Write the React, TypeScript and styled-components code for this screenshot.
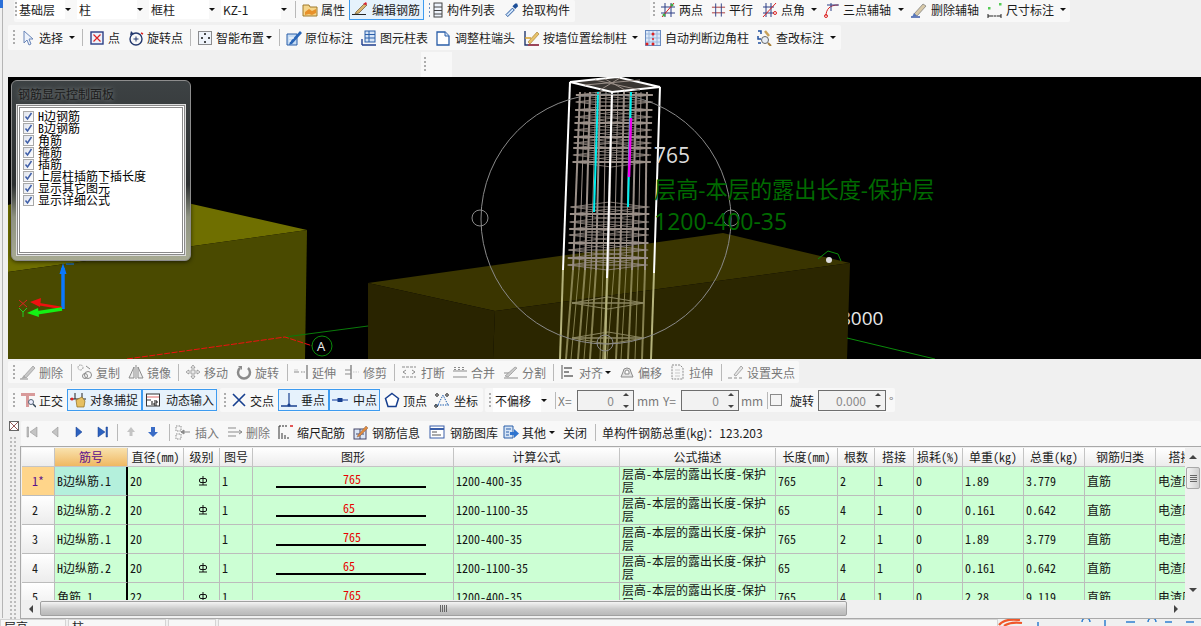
import React from "react";
import styled, { createGlobalStyle } from "styled-components";

const Global = createGlobalStyle`
  html, body { margin: 0; padding: 0; background: #f0f0f0; }
  body { font-family: "Noto Sans CJK SC", "Liberation Sans", sans-serif; font-size: 12px; color: #1c1c1c; }
`;

const Page = styled.div`
  position: relative; width: 1201px; height: 626px; overflow: hidden;
  background: #f0f0f0; display: flex; flex-direction: column;
  &::before { content: ""; position: absolute; left: 0; top: 0; width: 3px; height: 8px; background: #2a6fd8; }
  &::after { content: ""; position: absolute; left: 2px; top: 8px; bottom: 8px; width: 1px; background: #b5b5b5; }
`;
const Row = styled.div<{ $h: number; $mt?: number }>`
  display: flex; height: ${p => p.$h}px; margin-top: ${p => p.$mt ?? 0}px; flex: none;
`;
const BarBox = styled.div<{ $w: number; $ml: number; $pl: number; $mb?: number; $pb?: number }>`
  display: flex; align-items: center; flex: none; box-sizing: border-box;
  width: ${p => p.$w}px; margin-left: ${p => p.$ml}px; padding-left: ${p => p.$pl}px;
  margin-bottom: ${p => p.$mb ?? 0}px; padding-bottom: ${p => p.$pb ?? 0}px;
  background: #f8f8f8; border-radius: 2px;
`;
const Cell = styled.div<{ $w: number }>`
  display: flex; align-items: center; flex: none; width: ${p => p.$w}px; height: 100%; white-space: nowrap;
`;
const ToolBody = styled.div<{ $active?: boolean; $dim?: boolean }>`
  display: flex; align-items: center; width: 100%; height: ${p => (p.$active ? "22px" : "100%")};
  box-sizing: border-box; color: ${p => (p.$dim ? "#787878" : "#1c1c1c")};
  ${p => p.$active && "border: 1px solid #3d9bf0; background: #e6f2fc; margin-top: -1px;"}
`;
const IconSlot = styled.span<{ $w: number; $active?: boolean }>`
  display: flex; justify-content: center; flex: none; width: ${p => p.$w - (p.$active ? 1 : 0) - 3}px; margin-right: 3px;
`;
const Grip = styled.div`
  width: 2px; height: 15px;
  background: repeating-linear-gradient(#adadad 0 2px, transparent 2px 4px);
`;
const Sep = styled.div`
  width: 1px; height: 17px; background: #b9b9b9;
`;
const Drop = styled.div`
  width: 0; height: 0; border-left: 3px solid transparent; border-right: 3px solid transparent; border-top: 3px solid #111;
`;
const Combo = styled.div`
  width: 100%; height: 100%; box-sizing: border-box; padding-left: 2px; background: #fff;
  display: flex; align-items: center; font-size: 12px;
`;
const Spin = styled.div`
  width: 100%; height: 21px; box-sizing: border-box; border: 1px solid #6e6e6e; background: #f2f2f2;
  display: flex; align-items: center; justify-content: flex-end; color: #8a8a8a; font-size: 12px;
`;
const SpinVal = styled.span`margin-right: 9px;`;
const SpinArrows = styled.div`
  display: flex; flex-direction: column; justify-content: space-between; height: 15px; margin-right: 4px;
`;
const ArrowUp = styled.div`
  width: 0; height: 0; border-left: 3px solid transparent; border-right: 3px solid transparent; border-bottom: 3px solid #444;
`;
const ArrowDn = styled(ArrowUp)`transform: rotate(180deg);`;
const Square = styled.div`width: 10px; height: 10px; border: 1px solid #8a8a8a; background: #f4f4f4;`;
const Dim = styled.span`color: #787878;`;
const Handle = styled.div`
  margin: 2px 0 0 421px; width: 31px; height: 25px; background: #f8f8f8; display: flex; align-items: center; padding-left: 3px; box-sizing: border-box;
`;

/* ------------- icons ------------- */
const N = "#2c3f86", R = "#d22", G = "#8b8b8b", L = "#c9c9c9";
const icons: Record<string, React.ReactNode> = {
  prop: <><path d="M1 3h6l1 2h7v9H1z" fill="#f5d58a" stroke="#a07b2c" /><path d="M3 10l4-3 3 2 4-2v4l-4 2-3-1-4 1z" fill="#e8912a" /></>,
  edit: <><path d="M0 13.5h14" stroke="#222" /><path d="M4 11l8-8 3 1-8 8-4 1z" fill="#d9b46c" stroke="#6b5a3a" strokeWidth=".7" /><path d="M11 3l3-2 1 2-1 1z" fill="#d23" /></>,
  list: <><path d="M1 2h2M1 6h2M1 10h2M1 14h2" stroke="#3e6cb0" strokeWidth="1.5" strokeDasharray="1 1" /><rect x="6" y="1" width="8" height="14" fill="#eef3fb" stroke="#444" /><path d="M6 5h8M6 8.500h8M6 12h8" stroke="#444" /></>,
  pick: <><path d="M3 14l-1-1 7-7 2 2-7 7z" fill="#cfe4fb" stroke="#1d4f98" /><path d="M9 4l3 3 3-3-1-3h-2z" fill="#1d4f98" /></>,
  two: <><path d="M1 5h14M1 11h14M5 1v14M11 1v14" stroke={N} /><path d="M2 15L14 1" stroke={R} /><circle cx="4" cy="13" r="1.500" fill="#4a4" /><circle cx="12" cy="3" r="1.500" fill="#4a4" /></>,
  para: <><path d="M1 5h14M1 11h14" stroke="#a33" /><path d="M5 1v14M11 1v14" stroke={N} /></>,
  ang: <><path d="M1 5h11M1 11h11M4 1v14M9 1v14" stroke={N} /><path d="M1 15L14 1" stroke={R} /><circle cx="13" cy="11" r="1.500" fill="none" stroke={R} /></>,
  three: <><path d="M2 14C2 7 6 3 14 3" fill="none" stroke={R} /><path d="M7 1v8M3 3h12" stroke={N} /><circle cx="2" cy="14" r="1.500" fill="none" stroke={R} /></>,
  brush: <><path d="M0 15h9" stroke="#3b5aa8" strokeWidth="1.500" /><path d="M3 12l9-10 3 2-9 10z" fill="#d8c9a8" stroke="#777" strokeWidth=".7" /><path d="M1 15l2-4 3 3z" fill="#5577bb" /></>,
  dim: <><rect x="1" y="5" width="2.500" height="2.500" fill="#5c5" /><rect x="12" y="1" width="2.500" height="2.500" fill="#5c5" /><path d="M1 12v4M14 12v4M1 14h13" stroke="#222" /><path d="M6 14h1M9 14h1" stroke="#fff" /></>,
  cursor: <path d="M4 1v12l3-3 2 5 2-1-2-5h4z" fill="#eef3fb" stroke="#6a86b8" />,
  point: <><rect x="2" y="2" width="12" height="12" fill="#eef2fa" stroke={N} strokeWidth="1.400" /><path d="M4.500 4.500l7 7M11.500 4.500l-7 7" stroke={R} strokeWidth="1.200" /></>,
  rot: <><circle cx="8" cy="9" r="6" fill="none" stroke="#23386e" strokeWidth="1.400" /><path d="M8 6.500v5M5.500 9h5" stroke="#23386e" /><path d="M3 1l3 3-4 1z" fill="#23386e" /><path d="M13 3l2 1" stroke={R} strokeWidth="1.500" /></>,
  smart: <><rect x="1.500" y="1.500" width="13" height="13" fill="#eef3fa" stroke="#222" strokeDasharray="1 1" /><path d="M8 3v2M7 4h2M4 8h2M5 7v2M11 8h2M12 7v2M8 11v2M7 12h2" stroke="#111" /></>,
  inplace: <><path d="M1 4h10v11H1z" fill="#c7dcf3" stroke="#2a5ea8" /><path d="M4 12L14 1l2 2L6 14l-3 1z" fill="#2a66b8" /><path d="M3 8h5M3 11h2" stroke="#fff" /></>,
  table: <><path d="M1 15h14M1 9v6" stroke="#1f3f8f" strokeWidth="1.400" /><rect x="4" y="1" width="10" height="11" fill="#d5e4f6" stroke="#2a5ea8" /><path d="M4 4.500h10M4 8h10M8 1v11" stroke="#2a5ea8" /></>,
  adj: <><path d="M2 2h8l4 4v9H2z" fill="#fff" stroke="#2a5ea8" strokeWidth="1.300" /><path d="M10 2v4h4" fill="#d5e4f6" stroke="#2a5ea8" /></>,
  wall: <><path d="M1 1v14h14" fill="none" stroke="#23386e" strokeWidth="1.400" /><path d="M1 8h6" stroke="#d9a22a" strokeWidth="1.500" /><path d="M4 12L13 2l2 2-9 10z" fill="#e8c36a" stroke="#a0752a" strokeWidth=".6" /><path d="M4 15h11" stroke={R} /></>,
  auto: <><rect x=".5" y=".5" width="15" height="15" fill="#dbe8f8" stroke="#6a8cc0" /><path d="M4 1v14M8 1v14M12 1v14M1 4h14M1 8h14M1 12h14" stroke="#9cb7dc" /><circle cx="8" cy="4" r="1.500" fill={R} /><circle cx="2" cy="14" r="1.500" fill={R} /><circle cx="8" cy="14" r="1.500" fill={R} /><circle cx="8" cy="9" r="1" fill={R} /></>,
  check: <><path d="M1 1h3v3M1 6v3h3M1 13h3" fill="none" stroke="#1f4f9f" strokeWidth="1.500" /><path d="M8 1l4 5" stroke="#c9a25a" strokeWidth="2.500" /><circle cx="8" cy="10" r="3.500" fill="#e8eef6" stroke="#666" /><path d="M11 13l3 3" stroke="#a9803a" strokeWidth="2" /></>,
  dbrush: <><path d="M0 15h8" stroke={G} /><path d="M4 12l9-10 2 2-9 10z" fill={L} stroke={G} strokeWidth=".6" /><path d="M1 15l3-4 2 3z" fill="#aaa" /></>,
  copy: <><circle cx="3.500" cy="3.500" r="2.500" fill="none" stroke={G} strokeDasharray="1.500 1" /><circle cx="11" cy="11" r="3.500" fill="none" stroke={G} /><circle cx="8" cy="12" r="2.500" fill="none" stroke={G} /><path d="M9 2l4 3" stroke={G} /></>,
  mirror: <><path d="M8 1v14" stroke={G} /><path d="M6 3L1 14h5zM10 3l5 11h-5z" fill="#eee" stroke={G} /></>,
  move: <path d="M8 1l2 2.500H9V7h3.500V6L15 8l-2.500 2V9H9v3.500h1L8 15l-2-2.500h1V9H3.500v1L1 8l2.500-2v1H7V3.500H6z" fill="#e8e8e8" stroke={G} strokeWidth=".7" />,
  drot: <><path d="M4 4a6 6 0 1 0 8 0" fill="none" stroke={G} strokeWidth="2.500" /><path d="M2 2h4v4z" fill={G} /></>,
  extend: <><path d="M14 1v14" stroke={G} strokeWidth="1.500" /><path d="M1 8h5" stroke={G} /><path d="M8 8h4" stroke={G} strokeDasharray="1.500 1" /><path d="M1 6h4" stroke={L} /></>,
  trim: <><path d="M7 1v14" stroke={G} strokeWidth="1.500" /><path d="M1 6h6M1 10h6" stroke={G} /><path d="M9 8h6" stroke={L} strokeDasharray="1.500 1" /></>,
  brk: <><path d="M1 3h14M1 13h14" stroke={G} strokeDasharray="3 1" /><path d="M5 6L2 8l3 2M11 6l3 2-3 2" fill="none" stroke={G} /></>,
  merge: <><path d="M1 7h14M1 13h14" stroke={G} /><path d="M3 3v4M7 3v4M11 3v4" stroke={G} strokeDasharray="1 1" strokeWidth="2" /></>,
  split: <><path d="M1 14h14M1 9h8" stroke={G} /><path d="M2 12L12 3l2 1-9 9z" fill={L} stroke={G} strokeWidth=".6" /></>,
  align: <><path d="M2 1v14" stroke={G} strokeWidth="1.500" /><path d="M4 4h8M4 8h5M4 12h9" stroke={G} strokeWidth="2" /></>,
  offset: <><path d="M4 8a4 4 0 0 1 8 0l2 5H2z" fill="#e4e4e4" stroke={G} /><path d="M6 8a2 2 0 0 1 4 0v2H6z" fill="#fff" stroke={G} /></>,
  stretch: <><path d="M2 1h8l3 3v11H2z" fill="#f7f7f7" stroke={G} strokeDasharray="2 1" /><path d="M5 6h5M5 9h5M5 12h5" stroke={L} /></>,
  setp: <><path d="M0 14h4M6 14h3M11 14h3" stroke={G} /><path d="M6 11l7-9 2 2-7 8z" fill="#e7e7e7" stroke={G} strokeWidth=".7" /></>,
  ortho: <><path d="M1 1h14v3H9v11H6V4H1z" fill="#d89a9a" /><circle cx="11" cy="10" r="2.500" fill="#eef" stroke="#567" /><path d="M13 12l3 3" stroke="#345" strokeWidth="1.500" /></>,
  snap: <><path d="M0 7h16" stroke="#222" /><path d="M5 1v6M12 1v6" stroke="#222" /><circle cx="2" cy="7" r="1.500" fill={R} /><path d="M6 8l6-3 3 4-1 6H7z" fill="#e6c062" stroke="#8a6a20" strokeWidth=".7" /></>,
  dyn: <><rect x="1.500" y="2" width="13" height="12" fill="#fff" stroke="#333" /><path d="M2 5h12" stroke="#d66" /><path d="M2 8h4" stroke="#333" /><path d="M7 9v4M9 9h3v2H9v2h3" fill="none" stroke="#111" /></>,
  cross: <path d="M2 2l12 12M14 2L2 14" stroke="#173f8f" strokeWidth="1.600" />,
  perp: <><path d="M0 14h16" stroke="#173f8f" strokeWidth="1.500" /><path d="M8 1v13" stroke="#173f8f" strokeWidth="1.200" /><circle cx="8" cy="13" r="1.600" fill="#173f8f" /></>,
  mid: <><path d="M0 8h16" stroke="#4a6cb8" strokeWidth="1.400" /><rect x="5.500" y="6" width="5" height="4" fill="#173f8f" /></>,
  vertex: <path d="M8 1.500l6.500 5-2.500 8H4L1.500 6.500z" fill="#fff" stroke="#173f8f" strokeWidth="1.500" />,
  coord: <><path d="M1 13h14M3 15L9 3l5 10" fill="none" stroke="#2060b0" strokeDasharray="1.500 1" /><circle cx="3" cy="3" r="1.300" fill="none" stroke="#222" /><circle cx="13" cy="3" r="1.300" fill="none" stroke="#222" /><circle cx="2" cy="14" r="1.300" fill="none" stroke="#222" /></>,
  first: <path d="M3 3h1.500v10H3zM13 3v10L6 8z" fill="#c4c4c4" stroke={G} strokeWidth=".5" />,
  prev: <path d="M11 3v10L5 8z" fill="#c4c4c4" stroke={G} strokeWidth=".5" />,
  next: <path d="M5 3v10l6-5z" fill="#2c62c0" stroke="#173f8f" strokeWidth=".5" />,
  last: <path d="M3 3v10l7-5zM11 3h1.500v10H11z" fill="#2c62c0" stroke="#173f8f" strokeWidth=".5" />,
  up: <path d="M8 3l4 5H9.500v4h-3V8H4z" fill="#c4c4c4" />,
  down: <path d="M6 3h4v5h3l-5 5-5-5h3z" fill="#3a6cc6" />,
  ins: <><path d="M1 2h5v5H1zM1 10h5v5H1z" fill="none" stroke={G} strokeDasharray="1.500 1" /><path d="M6 8h9M6 8l3-2v4z" stroke={G} fill={G} /></>,
  del: <><path d="M1 4h8M1 8h8M1 12h8" stroke={G} /><path d="M9 8h6M12 6l3 2-3 2" stroke={G} fill="none" /></>,
  scale: <><path d="M1 2h9" stroke="#222" strokeDasharray="2 1" /><path d="M12 2h3" stroke={R} strokeWidth="1.500" /><path d="M1 2v13M4 9v6M7 11v4M10 13v2" stroke="#333" /></>,
  info: <><rect x="1" y="5" width="12" height="10" fill="#dbe6f6" stroke="#446" /><path d="M3 10h8M7 5v10" stroke="#446" /><path d="M5 11l8-9 2 2-8 8-3 1z" fill="#e08a3c" stroke="#865" strokeWidth=".5" /></>,
  lib: <><rect x="1" y="2" width="14" height="12" fill="#fff" stroke="#3a5ea8" /><path d="M1 5h14" stroke="#3a5ea8" strokeWidth="2" /><path d="M3 8h5M3 11h9" stroke="#555" /></>,
  other: <><path d="M1 2h9v12H1z" fill="#d5e4f6" stroke="#2a5ea8" /><path d="M3 5h5M3 8h3M3 11h3" stroke="#2a5ea8" /><path d="M7 8h4V5l5 4.500L11 14v-3H7z" fill="#2f74cf" /></>,
};

const Icon: React.FC<{ n: string; s?: number }> = ({ n, s = 16 }) => (
  <svg width={s} height={s} viewBox="0 0 16 16">{icons[n]}</svg>
);

/* ------------- toolbars ------------- */
type It = { at: number; k: "tool" | "grip" | "sep" | "drop" | "combo" | "gap" | "spin" | "box" | "text"; t?: number; i?: string; l?: string; a?: boolean; d?: boolean };
const tool = (at: number, t: number, i: string, l = "", a = false): It => ({ at, k: "tool", t, i, l, a });
const dtool = (at: number, t: number, i: string, l = ""): It => ({ at, k: "tool", t, i, l, d: true });
const grip = (at: number): It => ({ at, k: "grip" });
const sep = (at: number): It => ({ at, k: "sep" });
const drop = (at: number): It => ({ at, k: "drop" });
const gap = (at: number): It => ({ at, k: "gap" });
const combo = (at: number, l: string): It => ({ at, k: "combo", l });
const spin = (at: number, l: string): It => ({ at, k: "spin", l });
const text = (at: number, l: string, d = false): It => ({ at, k: "text", l, d });

const renderItem = (it: It) => {
  switch (it.k) {
    case "grip": return <Grip />;
    case "sep": return <Sep />;
    case "drop": return <Drop />;
    case "combo": return <Combo>{it.l}</Combo>;
    case "box": return <Square />;
    case "text": return it.d ? <Dim>{it.l}</Dim> : <span>{it.l}</span>;
    case "spin": return <Spin><SpinVal>{it.l}</SpinVal><SpinArrows><ArrowUp /><ArrowDn /></SpinArrows></Spin>;
    case "tool": return (
      <ToolBody $active={it.a} $dim={it.d}>
        <IconSlot $w={it.t! - it.at} $active={it.a}><Icon n={it.i!} /></IconSlot>
        {it.l}
      </ToolBody>
    );
    default: return null;
  }
};

const Bar: React.FC<{ from: number; start: number; end: number; items: It[]; mb?: number; pb?: number }> = ({ from, start, end, items, mb, pb }) => (
  <BarBox $ml={start - from} $w={end - start} $pl={items[0].at - start} $mb={mb} $pb={pb}>
    {items.map((it, i) => (
      <Cell key={i} $w={(items[i + 1]?.at ?? end) - it.at}>{renderItem(it)}</Cell>
    ))}
  </BarBox>
);

const row1a: It[] = [grip(15), combo(17, "基础层"), drop(65), combo(77, "柱"), drop(137), combo(149, "框柱"), drop(209), combo(221, "KZ-1"), drop(281), sep(295),
  tool(302, 321, "prop", "属性"), gap(345), tool(349, 372, "edit", "编辑钢筋", true), gap(424), tool(428, 447, "list", "构件列表"), tool(504, 522, "pick", "拾取构件")];
const row1b: It[] = [grip(653), tool(660, 679, "two", "两点"), tool(711, 729, "para", "平行"), tool(762, 781, "ang", "点角"), drop(811),
  tool(824, 843, "three", "三点辅轴"), drop(898), tool(910, 931, "brush", "删除辅轴"), tool(986, 1006, "dim", "尺寸标注"), drop(1060)];
const row2: It[] = [grip(13), tool(20, 39, "cursor", "选择"), drop(69), sep(82), tool(89, 108, "point", "点"), tool(127, 147, "rot", "旋转点"), sep(190),
  tool(196, 216, "smart", "智能布置"), drop(266), sep(279), tool(285, 305, "inplace", "原位标注"), tool(361, 380, "table", "图元柱表"), tool(434, 455, "adj", "调整柱端头"),
  tool(523, 543, "wall", "按墙位置绘制柱"), drop(632), tool(643, 665, "auto", "自动判断边角柱"), tool(756, 776, "check", "查改标注"), drop(830)];
const row4: It[] = [grip(13), dtool(20, 39, "dbrush", "删除"), sep(71), dtool(76, 96, "copy", "复制"), dtool(127, 147, "mirror", "镜像"), sep(178),
  dtool(185, 204, "move", "移动"), dtool(235, 255, "drot", "旋转"), sep(287), dtool(293, 312, "extend", "延伸"), dtool(344, 363, "trim", "修剪"), sep(394),
  dtool(400, 421, "brk", "打断"), dtool(451, 471, "merge", "合并"), dtool(502, 522, "split", "分割"), sep(553), dtool(559, 579, "align", "对齐"), drop(605),
  dtool(618, 638, "offset", "偏移"), dtool(669, 689, "stretch", "拉伸"), sep(721), dtool(727, 747, "setp", "设置夹点")];
const row5a: It[] = [grip(13), tool(19, 39, "ortho", "正交"), gap(67), tool(67, 90, "snap", "对象捕捉", true), tool(142, 166, "dyn", "动态输入", true)];
const row5b: It[] = [grip(224), tool(230, 250, "cross", "交点"), tool(278, 301, "perp", "垂点", true), tool(329, 353, "mid", "中点", true), gap(380), tool(383, 403, "vertex", "顶点"), tool(433, 454, "coord", "坐标")];
const row5c: It[] = [grip(489), combo(493, "不偏移"), drop(541), sep(555), text(558, "X=", true), spin(577, "0"), gap(634), text(637, "mm", true), text(663, "Y=", true), spin(681, "0"), gap(739), text(741, "mm", true),
  sep(767), { at: 770, k: "box" }, text(790, "旋转"), spin(818, "0.000"), gap(886), text(889, "°", true)];
const row6: It[] = [tool(24, 43, "first"), tool(47, 66, "prev"), tool(71, 90, "next"), tool(95, 114, "last"), sep(117), tool(123, 142, "up"), tool(145, 164, "down"), sep(169),
  dtool(174, 195, "ins", "插入"), dtool(226, 246, "del", "删除"), tool(277, 297, "scale", "缩尺配筋"), tool(352, 372, "info", "钢筋信息"), tool(427, 450, "lib", "钢筋图库"),
  tool(502, 522, "other", "其他"), drop(549), { at: 563, k: "text", l: "关闭" }, sep(595), text(602, "单构件钢筋总重(kg)：123.203")];

/* ------------- 3D scene ------------- */
const Viewport = styled.div`
  position: relative; flex: none; height: 282px; margin-left: 8px; background: #000; overflow: hidden;
`;
const SceneSvg = styled.svg`display: block;`;
const SceneLabel = styled.text<{ $c: string; $s: number }>`
  font-family: "Open Sans", "Noto Sans CJK SC", sans-serif; font-size: ${p => p.$s}px; fill: ${p => p.$c};
`;
const top0 = [580, 585, 590, 596, 600, 606, 612, 618, 624, 630, 636, 641, 647];
const bot0 = [573, 579, 585, 591, 596, 603, 608, 614, 620, 626, 632, 638, 645];
const low0 = [566, 571, 578, 584, 590, 600, 603, 607, 616, 621, 628, 635, 642];
const levels = [95, 102, 110, 117, 123, 130, 137, 143, 148, 155, 162, 207, 214, 222, 229, 235, 243, 250, 258, 265];

const Scene: React.FC = () => (
  <SceneSvg width="1193" height="282" viewBox="8 77 1193 282">
    <SceneLabel x="840" y="325" $c="#e8e8e8" $s={19}>8000</SceneLabel>
    <polygon points="8,205 90,181 307,230 8,272" fill="#6f6f00" />
    <polygon points="8,272 307,230 305,359 8,359" fill="#4a4a00" />
    <polygon points="368,283 723,233 850,263 495,311" fill="#3a3500" />
    <polygon points="368,283 495,311 493,359 368,359" fill="#292400" />
    <polygon points="495,311 850,263 847,359 493,359" fill="#2b2600" />
    <path d="M847 338L935 359" stroke="#0a8a0a" />
    <path d="M285 337L368 326" stroke="#0a7a0a" />
    <path d="M127 359L285 337L325 350" stroke="#f01010" strokeDasharray="6 1.500" fill="none" />
    <circle cx="322" cy="346" r="10" fill="#000" stroke="#0a8a0a" />
    <SceneLabel x="317" y="351" $c="#eee" $s={13}>A</SceneLabel>
    <path d="M818 259l10-8 10 3 3 7" fill="none" stroke="#0a8a0a" />
    <circle cx="829" cy="260" r="3" fill="#ddd" />

    <path d="M63 309V268" stroke="#0a78ff" strokeWidth="3.500" />
    <path d="M63 263l-3.500 11h7z" fill="#0a78ff" />
    <path d="M66 264h8" stroke="#0a78ff" />
    <path d="M62 308L38 304" stroke="#f01010" strokeWidth="2.500" />
    <path d="M30 302l11-4-1 9z" fill="#f01010" />
    <path d="M62 309L36 313" stroke="#14f014" strokeWidth="3.500" />
    <path d="M27 313l11-5 1 9z" fill="#14f014" />
    <path d="M19 300l8 7M27 300l-8 7" stroke="#d22" />
    <path d="M19 308l4 4 4-4M23 312v5" stroke="#2c2" fill="none" />

    {top0.map((x, i) => <path key={i} d={`M${x} 92L${bot0[i]} 270`} stroke="#9a8f88" strokeWidth={i % 2 ? 1 : 2} />)}
    {bot0.map((x, i) => <path key={i} d={`M${x} 270L${low0[i]} 359`} stroke="#96915e" strokeWidth={i % 2 ? 1 : 2} opacity=".85" />)}
    {levels.map((y, n) => {
      const l = 577 - (y - 92) * 0.05, r = 651 - (y - 92) * 0.03, m = (l + r) / 2;
      return (
        <g key={y} stroke="#9a8f88" fill="none">
          <path d={`M${l - 1} ${y}H${r + 2}`} strokeWidth={n % 2 ? 1 : 2} />
          <path d={`M${l} ${y}L${m} ${y - 5}L${r} ${y}L${m} ${y + 5}z`} strokeWidth=".8" />
        </g>
      );
    })}
    {[303, 338].map(y => (
      <g key={y} stroke="#8b8660" fill="none">
        <path d={`M572 ${y}H644`} strokeWidth="1.500" />
        <path d={`M572 ${y}L608 ${y - 6}L644 ${y}L608 ${y + 6}z`} />
      </g>
    ))}
    <path d="M598 92L594 212" stroke="#00f0f0" strokeWidth="2" />
    <path d="M631 92L628 207" stroke="#00f0f0" strokeWidth="2" />
    <path d="M631 118L629 177" stroke="#f000f0" strokeWidth="2.500" />

    <path d="M570 82L617 77L660 87L612 92z" fill="#3a3632" stroke="#fff" strokeWidth="2" />
    <path d="M585 85L640 80M595 80L640 90M605 79L625 90M620 78L600 90" stroke="#9a8f88" />
    <g stroke="#fff" strokeWidth="2" fill="none">
      <path d="M570 82L563 270" />
      <path d="M660 87L654 273" />
      <path d="M612 92L607 278" />
    </g>
    <g stroke="#b5b37c" strokeWidth="2" fill="none">
      <path d="M563 270L560 359" />
      <path d="M654 273L651 359" />
      <path d="M607 278L605 359" />
    </g>

    <g stroke="#8a8a8a" fill="none">
      <circle cx="606" cy="219" r="125" />
      <circle cx="480" cy="218" r="8" />
      <circle cx="731" cy="218" r="8" />
      <circle cx="605" cy="343" r="8" />
    </g>
    <SceneLabel x="654" y="163" $c="#dcdcdc" $s={21}>765</SceneLabel>
    <SceneLabel x="654" y="198" $c="#006a00" $s={22.200}>层高-本层的露出长度-保护层</SceneLabel>
    <SceneLabel x="654" y="230" $c="#006a00" $s={23}>1200-400-35</SceneLabel>
  </SceneSvg>
);

/* ------------- rebar display panel ------------- */
const Panel = styled.div`
  position: absolute; left: 3px; top: 3px; width: 180px; height: 181px; box-sizing: border-box;
  border: 1px solid #8d8d8d; border-radius: 6px; padding: 6px 5px 5px;
  background: linear-gradient(#3d4244 0, #2b2e2f 58%, #8d9180 76%, #a7aa92 100%);
  box-shadow: 0 1px 4px rgba(0, 0, 0, .6);
`;
const PanelTitle = styled.div`
  height: 18px; line-height: 14px; padding-left: 1px; font-size: 12px; color: #1b1b1b;
  text-shadow: 0 0 5px #8a8f90;
`;
const PanelList = styled.div`
  height: 150px; box-sizing: border-box; border: 3px double #8a8a8a; background: #fff; padding: 2px 0 0 3px; outline: 1px solid #ddd;
`;
const PanelRow = styled.label`
  display: flex; align-items: center; height: 12px; font-size: 12px; line-height: 12px; color: #000; white-space: nowrap;
  font-feature-settings: "hwid";
`;
const CheckMark = styled.span`
  flex: none; width: 9px; height: 9px; margin-right: 4px; border: 1px solid #a9a9a9; display: flex;
  background: linear-gradient(135deg, #dfe3ec, #fff);
`;
const panelRows = ["H边钢筋", "B边钢筋", "角筋", "箍筋", "插筋", "上层柱插筋下插长度", "显示其它图元", "显示详细公式"];

/* ------------- lower area ------------- */
const Lower = styled.div`display: flex; flex: none; margin-top: 9px; height: 198px;`;
const Side = styled.div`
  flex: none; width: 20px; box-sizing: border-box; padding: 0 0 0 9px; display: flex; flex-direction: column;
`;
const CornerIcon = styled.svg`flex: none; display: block;`;
const SideDots = styled.div`
  width: 6px; margin: 4px 0 0 1px; flex: 1;
  background:
    repeating-linear-gradient(#f0f0f0 0 2px, transparent 2px 4px),
    repeating-linear-gradient(90deg, #bcbcbc 0 2px, transparent 2px 4px);
`;
const Main = styled.div`flex: 1; display: flex; flex-direction: column; min-width: 0;`;
const GridFrame = styled.div`
  flex: none; height: 173px; box-sizing: border-box; border: 1px solid #a9a9a9; border-right: 0; padding: 1px 0 0 1px;
  display: grid; grid-template-columns: 1163px 16px; grid-template-rows: 152px 17px; background: #f0f0f0;
`;
const TableArea = styled.div`overflow: hidden; background: #fff;`;
const Table = styled.table`
  table-layout: fixed; border-collapse: separate; border-spacing: 0; width: 1208px;
  font-size: 12px; line-height: 13px; font-feature-settings: "hwid"; color: #151515;
`;
const Th = styled.th<{ $sel?: boolean }>`
  height: 19px; padding: 0 0 2px; box-sizing: border-box; font-weight: 400; text-align: center; white-space: nowrap;
  border-right: 1px solid #c4c4c4; border-bottom: 1px solid #c4c4c4;
  background: ${p => (p.$sel ? "linear-gradient(#f9e2ae, #f0b862)" : "linear-gradient(#ffffff, #ececec)")};
  color: ${p => (p.$sel ? "#5b0f8c" : "#1c1c1c")};
`;
const RowHead = styled.td<{ $sel?: boolean }>`
  height: 29px; padding: 0 0 2px 10px; box-sizing: border-box;
  border-right: 1px solid #bcbcbc; border-bottom: 1px solid #bcbcbc;
  background: ${p => (p.$sel ? "#ffd58a" : "linear-gradient(#ffffff, #ececec)")};
  color: ${p => (p.$sel ? "#5b0f8c" : "#1c1c1c")};
`;
const Td = styled.td<{ $sel?: boolean; $thick?: boolean; $center?: boolean }>`
  height: 29px; padding: 0 0 2px 2px; box-sizing: border-box; overflow: hidden;
  white-space: nowrap; text-align: ${p => (p.$center ? "center" : "left")};
  border-right: ${p => (p.$thick ? "2px solid #000" : "1px solid #bcbcbc")}; border-bottom: 1px solid #bcbcbc;
  background: ${p => (p.$sel ? "#b4f0dc" : "#ccffd4")};
`;
const WrapTd = styled(Td)`white-space: normal; word-break: break-all;`;
const ShapeTd = styled(Td)`padding: 0; vertical-align: top;`;
const ShapeNum = styled.div`
  padding: 6px 0 0 90px; height: 12px; line-height: 12px; color: #e80000;
`;
const ShapeLine = styled.div`margin: 1px 0 0 23px; width: 150px; height: 2px; background: #000;`;
const HScroll = styled.div`
  display: flex; align-items: center; height: 17px; background: #f0f0f0;
`;
const ScrollBtn = styled.div`flex: none; width: 18px; display: flex; justify-content: center;`;
const ArrowL = styled.div`
  width: 0; height: 0; border-top: 4px solid transparent; border-bottom: 4px solid transparent; border-right: 4px solid #444;
`;
const ArrowR = styled(ArrowL)`transform: rotate(180deg);`;
const HThumb = styled.div`
  flex: none; width: 807px; height: 15px; box-sizing: border-box; border: 1px solid #a0a0a0; border-radius: 2px;
  background: linear-gradient(#f4f4f4, #c9c9c9 55%, #b9b9b9); display: flex; align-items: center; justify-content: center;
`;
const ThumbGrip = styled.div`
  width: 7px; height: 7px; background: repeating-linear-gradient(90deg, #666 0 1px, transparent 1px 2px);
`;
const HTrack = styled.div`flex: 1;`;
const VScroll = styled.div`
  grid-row: 1 / span 2; grid-column: 2; display: flex; flex-direction: column; align-items: center; background: #f0f0f0;
`;
const VUp = styled.div`
  margin-top: 7px; width: 0; height: 0; border-left: 4px solid transparent; border-right: 4px solid transparent; border-bottom: 4px solid #444;
`;
const VDn = styled(VUp)`margin-top: 99px; transform: rotate(180deg);`;
const VThumb = styled.div`
  margin-top: 8px; width: 14px; height: 22px; box-sizing: border-box; border: 1px solid #a8a8a8; border-radius: 2px;
  background: linear-gradient(90deg, #f4f4f4, #cfcfcf); display: flex; align-items: center; justify-content: center;
`;
const VGrip = styled.div`
  width: 7px; height: 7px; background: repeating-linear-gradient(#666 0 1px, transparent 1px 2px);
`;
const Status = styled.div`
  flex: none; height: 7px; display: flex; overflow: hidden; position: relative; gap: 2px; background: #f0f0f0;
`;
const StatusCell = styled.div<{ $w: number }>`
  flex: none; width: ${p => p.$w}px; box-sizing: border-box; border: 1px solid #d4d4d4; border-bottom: 0; background: #f7f7f7;
  padding-left: 3px; font-size: 12px; line-height: 14px; color: #222;
`;
const StatusLogo = styled.svg`position: absolute; left: 998px; top: 0;`;

const cols = [33, 73, 56, 36, 33, 201, 166, 156, 62, 37, 39, 49, 61, 61, 71, 74];
const heads = ["", "筋号", "直径(mm)", "级别", "图号", "图形", "计算公式", "公式描述", "长度(mm)", "根数", "搭接", "损耗(%)", "单重(kg)", "总重(kg)", "钢筋归类", "搭接形式"];
const data = [
  { n: "B边纵筋.1", d: "20", g: true, s: "765", f: "1200-400-35", len: "765", c: "2", u: "1.89", t: "3.779" },
  { n: "B边纵筋.2", d: "20", g: true, s: "65", f: "1200-1100-35", len: "65", c: "4", u: "0.161", t: "0.642" },
  { n: "H边纵筋.1", d: "20", g: false, s: "765", f: "1200-400-35", len: "765", c: "2", u: "1.89", t: "3.779" },
  { n: "H边纵筋.2", d: "20", g: true, s: "65", f: "1200-1100-35", len: "65", c: "4", u: "0.161", t: "0.642" },
  { n: "角筋.1", d: "22", g: true, s: "765", f: "1200-400-35", len: "765", c: "4", u: "2.28", t: "9.119" },
];

const GradeMark = () => (
  <svg width="10" height="10" viewBox="0 0 10 10"><path d="M5 0v9M1 9h8" stroke="#111" /><rect x="1.500" y="2.500" width="7" height="4" rx="1.500" fill="none" stroke="#111" /></svg>
);

export default function App() {
  return (
    <Page>
      <Global />
      <Row $h={25}>
        <Bar from={0} start={14} end={575} items={row1a} mb={3} pb={3} />
        <Bar from={575} start={650} end={1070} items={row1b} mb={3} pb={3} />
      </Row>
      <Row $h={25}><Bar from={0} start={8} end={841} items={row2} /></Row>
      <Row $h={27}><Handle><Grip /></Handle></Row>
      <Viewport>
        <Scene />
        <Panel>
          <PanelTitle>钢筋显示控制面板</PanelTitle>
          <PanelList>
            {panelRows.map(r => (
              <PanelRow key={r}>
                <CheckMark>
                  <svg width="9" height="9" viewBox="0 0 9 9"><path d="M1.500 4.500l2 2.500 4-6" fill="none" stroke="#3f5fa8" strokeWidth="1.500" /></svg>
                </CheckMark>
                {r}
              </PanelRow>
            ))}
          </PanelList>
        </Panel>
      </Viewport>
      <Row $h={22} $mt={2}><Bar from={0} start={8} end={799} items={row4} /></Row>
      <Row $h={24} $mt={5}>
        <Bar from={0} start={8} end={217} items={row5a} />
        <Bar from={217} start={220} end={483} items={row5b} />
        <Bar from={483} start={485} end={895} items={row5c} />
      </Row>
      <Lower>
        <Side>
          <CornerIcon width="10" height="10" viewBox="0 0 10 10">
            <rect x=".5" y=".5" width="9" height="9" fill="#fff" stroke="#666" />
            <path d="M1 1l8 8M9 1L1 9" stroke="#9a5a5a" />
          </CornerIcon>
          <SideDots />
        </Side>
        <Main>
          <Row $h={25}><Bar from={20} start={21} end={1201} items={row6} pb={3} /></Row>
          <GridFrame>
            <TableArea>
              <Table>
                <colgroup>{cols.map((w, i) => <col key={i} width={w} />)}</colgroup>
                <thead>
                  <tr>{heads.map((h, i) => <Th key={i} $sel={i === 1}>{h}</Th>)}</tr>
                </thead>
                <tbody>
                  {data.map((r, i) => (
                    <tr key={i}>
                      <RowHead $sel={i === 0}>{i === 0 ? "1*" : i + 1}</RowHead>
                      <Td $sel={i === 0} $thick>{r.n}</Td>
                      <Td>{r.d}</Td>
                      <Td $center>{r.g && <GradeMark />}</Td>
                      <Td>1</Td>
                      <ShapeTd><ShapeNum>{r.s}</ShapeNum><ShapeLine /></ShapeTd>
                      <Td>{r.f}</Td>
                      <WrapTd>层高-本层的露出长度-保护层</WrapTd>
                      <Td>{r.len}</Td>
                      <Td>{r.c}</Td>
                      <Td>1</Td>
                      <Td>0</Td>
                      <Td>{r.u}</Td>
                      <Td>{r.t}</Td>
                      <Td>直筋</Td>
                      <Td>电渣压力焊</Td>
                    </tr>
                  ))}
                </tbody>
              </Table>
            </TableArea>
            <VScroll>
              <VUp />
              <VThumb><VGrip /></VThumb>
              <VDn />
            </VScroll>
            <HScroll>
              <ScrollBtn><ArrowL /></ScrollBtn>
              <HThumb><ThumbGrip /></HThumb>
              <HTrack />
              <ScrollBtn><ArrowR /></ScrollBtn>
            </HScroll>
          </GridFrame>
        </Main>
      </Lower>
      <Status>
        <StatusCell $w={66}>层高</StatusCell>
        <StatusCell $w={98}>柱</StatusCell>
        <StatusCell $w={48} />
        <StatusCell $w={780} />
        <StatusLogo width="203" height="7" viewBox="0 0 203 7">
          <path d="M1 6C5 1 14 0 22 1M6 7C10 4 16 3 24 4" fill="none" stroke="#f0562a" strokeWidth="2.200" />
          <path d="M40 3v4M84 3a4 4 0 0 1 8 0M107 1v6M128 3h9M150 3a4 4 0 0 1 8 0M167 3h7M188 3h8" fill="none" stroke="#2f7fd0" strokeWidth="1.500" />
        </StatusLogo>
      </Status>
    </Page>
  );
}
